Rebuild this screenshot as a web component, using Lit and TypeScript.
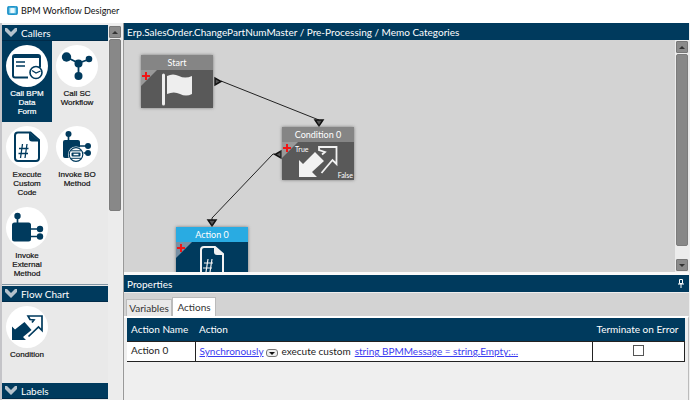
import { LitElement, html, css, svg } from "lit";
import { customElement } from "lit/decorators.js";

const NAVY = "#003a5d";

const icons = {
  form: svg`
    <path d="M9 10h23q2 0 2 2v10.500M22 32.500H9q-2 0-2-2V12q0-2 2-2" fill="none" stroke="${NAVY}" stroke-width="2"/>
    <path d="M7 10h27v3H7z" fill="${NAVY}"/>
    <path d="M10 17h9M10 21h9" stroke="${NAVY}" stroke-width="1.600"/>
    <circle cx="30" cy="27.500" r="6" fill="#fff" stroke="${NAVY}" stroke-width="1.600"/>
    <path d="M26 25.500l4 2.500 4.500-2" fill="none" stroke="${NAVY}" stroke-width="1.300"/>`,
  workflow: svg`
    <path d="M10 12l12.500 6L34 14M22.500 18v13" fill="none" stroke="${NAVY}" stroke-width="1.800"/>
    <circle cx="10.500" cy="12" r="4.700" fill="${NAVY}"/>
    <circle cx="22.500" cy="18.500" r="4" fill="${NAVY}"/>
    <circle cx="33" cy="14" r="3.300" fill="${NAVY}"/>
    <circle cx="22.500" cy="31" r="4" fill="${NAVY}"/>`,
  code: svg`
    <path d="M12 6.500h12.500L33 14v18q0 3-3 3H12q-3 0-3-3V9.500q0-3 3-3z" fill="none" stroke="${NAVY}" stroke-width="2"/>
    <path d="M23 6L33.500 15.500H26q-3 0-3-3z" fill="${NAVY}"/>
    <path d="M16.500 18l-2 14M21 18l-2 14M13 22.500h9.500M12.500 27.500h9.500" stroke="${NAVY}" stroke-width="1.300"/>`,
  bo: svg`
    <path d="M12.500 9v8M24 20h8M24 27h8" stroke="${NAVY}" stroke-width="1.700"/>
    <circle cx="12.500" cy="8" r="3" fill="${NAVY}"/>
    <rect x="7" y="14" width="17" height="18" rx="2" fill="${NAVY}"/>
    <circle cx="32" cy="20" r="3" fill="${NAVY}"/><circle cx="32" cy="27" r="3" fill="${NAVY}"/>
    <circle cx="20" cy="28.500" r="8" fill="#fff"/>
    <circle cx="20" cy="28.500" r="6.800" fill="#fff" stroke="${NAVY}" stroke-width="1.200"/>
    <path d="M15 24.800h10M15 32.300h10" fill="none" stroke="${NAVY}" stroke-width="1"/>
    <rect x="15.500" y="26.500" width="9" height="4" rx="1" fill="${NAVY}"/>
    <path d="M17.500 28.500h5" stroke="#fff" stroke-width="1.300"/>`,
  external: svg`
    <path d="M11.500 9v8M25 22h9M25 29.500h9" stroke="${NAVY}" stroke-width="1.700"/>
    <circle cx="11.500" cy="9" r="3.200" fill="${NAVY}"/>
    <rect x="6" y="15.500" width="19" height="19" rx="2.500" fill="${NAVY}"/>
    <circle cx="34" cy="22" r="3.200" fill="${NAVY}"/><circle cx="34" cy="29.500" r="3.200" fill="${NAVY}"/>`,
  condition: svg`
    <path d="M6 34V20.500l3 3L18.500 16l7 8-8.500 7 3 3z" fill="${NAVY}"/>
    <path d="M22.500 30.500L32.500 21l3.500 3.500V10H22l2 3.500 4 .5-2 2.500" fill="none" stroke="${NAVY}" stroke-width="1.700"/>`,
};

const glyphs = {
  flag: svg`
    <path d="M22.500 5v29" stroke="#eee" stroke-width="3" stroke-linecap="round"/>
    <path d="M26 6q6-3 12 0t13 0v18q-6 3-12 0t-13 0z" fill="#eee"/>`,
  arrows: svg`
    <path d="M17 35V18l4 4L33 10l9 9-12 11 5 5z" fill="#f2f2f2"/>
    <path d="M39.500 31L50.500 18l4 4V5H37v3l6 2-3 2.500" fill="none" stroke="#f2f2f2" stroke-width="1.800"/>`,
  file: svg`
    <path d="M28 5h11l8 7v22q0 3-3 3H28q-3 0-3-3V8q0-3 3-3z" fill="none" stroke="#f2f2f2" stroke-width="2"/>
    <path d="M38 4l10 9h-7q-3 0-3-3z" fill="#f2f2f2"/>
    <path d="M32 17l-2 13M36 17l-2 13M28 21h9M27 26h9" stroke="#f2f2f2" stroke-width="1.200"/>`,
};

const tiles = [
  { icon: icons.form, label: "Call BPM Data Form", selected: true },
  { icon: icons.workflow, label: "Call SC Workflow" },
  { icon: icons.code, label: "Execute Custom Code" },
  { icon: icons.bo, label: "Invoke BO Method" },
  { icon: icons.external, label: "Invoke External Method" },
];

const nodes = [
  { name: "Start", x: 17, y: 15, glyph: glyphs.flag, kind: "" },
  { name: "Condition 0", x: 158, y: 87, glyph: glyphs.arrows, kind: "branch" },
  { name: "Action 0", x: 52, y: 187, glyph: glyphs.file, kind: "active" },
];

@customElement("app-root")
export class AppRoot extends LitElement {
  static styles = css`
    :host {
      display: flex;
      flex-direction: column;
      height: 100vh;
      overflow: hidden;
      background: #fff;
      color: #222;
      font: 10px/16px Lato, "Open Sans", sans-serif;
    }
    * { box-sizing: border-box; }
    svg { display: block; }
    button { font: inherit; color: inherit; border: 0; padding: 0; margin: 0; background: none; }
    .titlebar {
      display: flex;
      align-items: center;
      gap: 3px;
      height: 23px;
      padding: 0 7px 2px;
      flex: none;
      color: #111;
      font-size: 9px;
    }
    .titlebar h1, .bar h2 { font: inherit; margin: 0; }
    .work { display: flex; flex: 1; min-height: 0; background: #efefef; }
    .palette {
      width: 124px;
      flex: none;
      display: flex;
      padding: 2px 1px 0 0;
      border-left: 2px solid #c4c4c8;
      border-right: 1px solid #999;
    }
    .groups { flex: 1; overflow: hidden; background: #e9e9e9; }
    .group {
      width: 100%;
      display: flex;
      align-items: center;
      gap: 4px;
      height: 16px;
      padding-left: 3px;
      border-bottom: 1px solid #002b49;
      background: #003a5d;
      color: #fff;
    }
    .tiles { display: grid; grid-template-columns: 50px 50px; grid-auto-rows: 81px; }
    .tiles.first { border-bottom: 1px solid #8296a4; margin-bottom: 1px; }
    .tiles.flow { height: 81px; }
    .tile {
      display: flex;
      flex-direction: column;
      align-items: center;
      padding: 4px 2px 0;
      font: 8px/9px "Liberation Sans", Arial, sans-serif;
      color: #111;
      -webkit-text-stroke: 0.2px;
      text-align: center;
    }
    .tile span { width: 44px; margin-top: 2px; }
    .tile .narrow { width: 36px; }
    .tile.selected { background: #003a5d; color: #fff; }
    .disc { background: #fff; border-radius: 50%; flex: none; }
    .scroll {
      width: 14px;
      flex: none;
      display: flex;
      flex-direction: column;
      gap: 1px;
      padding: 1px;
      background: #ececec;
    }
    .step {
      height: 12px;
      display: grid;
      place-items: center;
      border: 1px solid #777;
      border-radius: 1px;
      background: #8b8b8b;
      flex: none;
    }
    .thumb { background: #888; border: 1px solid #7c7c7c; border-radius: 2px; }
    .palette .thumb { flex: 0 1 172px; }
    .surface .thumb { flex: 1; margin-bottom: 12px; }
    .main {
      flex: 1;
      min-width: 0;
      display: grid;
      grid-template-rows: minmax(0, 1fr) 125px;
      padding-right: 1px;
    }
    .main > section { display: flex; flex-direction: column; min-height: 0; }
    .bar {
      display: flex;
      align-items: center;
      justify-content: space-between;
      height: 17px;
      padding: 0 5px 0 3px;
      flex: none;
      background: #003a5d;
      color: #fff;
    }
    .surface { flex: 1; display: flex; min-height: 0; background: #d3d3d3; border-bottom: 3px solid #fafafa; }
    .canvas { flex: 1; position: relative; overflow: hidden; }
    .links { position: absolute; left: 0; top: 0; }
    .node {
      position: absolute;
      width: 72px;
      background: #595959;
      color: #fff;
      box-shadow: 0 0 3px #777;
    }
    .node header {
      height: 15px;
      background: #858585;
      text-align: center;
      font-size: 9px;
      line-height: 15px;
    }
    .node.active { background: #003a5d; }
    .node.active header { background: #29abe2; }
    .yes, .no { position: absolute; font-size: 7px; line-height: 10px; }
    .yes { left: 13px; top: 17px; }
    .no { right: 1px; bottom: 0; }
    .properties { background: #efefef; }
    .tabs {
      display: flex;
      align-items: flex-end;
      height: 24px;
      padding-left: 2px;
      flex: none;
      background: #d3d3d3;
      border-top: 1px solid #eee;
    }
    .tab { height: 17px; width: 46px; border: 1px solid #bbb; border-bottom: 0; background: #e9e9e9; color: #333; }
    .tab.on { height: 19px; width: 44px; background: #fff; }
    .sheet { flex: 1; border-top: 2px solid #fff; padding: 0 3px; border-right: 1px solid #bbb; }
    table { width: 100%; border-collapse: collapse; table-layout: fixed; color: #222; }
    th {
      height: 23px;
      padding: 0 4px;
      background: #003a5d;
      color: #fff;
      font-weight: normal;
      text-align: left;
      white-space: nowrap;
    }
    td { height: 20px; padding: 0 4px; background: #fff; border: 1px solid #222; }
    td:first-child { border-left: 0; padding-bottom: 2px; }
    .name { width: 68px; }
    .error { width: 92px; }
    .rule { display: flex; align-items: center; gap: 4px; white-space: nowrap; }
    .rule a { color: #3a3af0; }
    .rule .mode { display: flex; align-items: center; gap: 2px; }
    .drop {
      width: 12px;
      height: 8px;
      display: grid;
      place-items: center;
      margin-top: 4px;
      border: 1px solid #777;
      border-radius: 3px;
      background: #eee;
    }
    .center { text-align: center; }
    .tick { appearance: none; display: block; width: 11px; height: 11px; margin: 0 auto 2px; border: 1px solid #555; background: #fff; }
  `;

  private group(name: string) {
    return html`<button class="group">
      <svg width="12" height="9" viewBox="0 0 12 9" aria-hidden="true">
        <path d="M0 0h2l4 4 4-4h2v3L6 9 0 3z" fill="#b4c2cc"/>
      </svg>${name}</button>`;
  }

  private tile(t: { icon: unknown; label: string; selected?: boolean }) {
    const narrow = t.label.split(" ").length > 2 && t.label !== "Invoke BO Method";
    return html`<button class="tile ${t.selected ? "selected" : ""}">
      <svg class="disc" width="42" height="42" viewBox="0 0 42 42" aria-hidden="true">${t.icon}</svg>
      <span class=${narrow ? "narrow" : ""}>${t.label}</span>
    </button>`;
  }

  private step(up: boolean) {
    return html`<button class="step" aria-label=${up ? "Scroll up" : "Scroll down"}>
      <svg width="6" height="3" viewBox="0 0 6 3"><path d=${up ? "M0 3l3-3 3 3z" : "M0 0h6L3 3z"} fill="#333"/></svg>
    </button>`;
  }

  render() {
    return html`
      <header class="titlebar">
        <svg width="11" height="9" viewBox="0 0 12 10" aria-hidden="true">
          <rect x="1" y="1" width="10" height="8" rx="1" fill="#e4f6fc" stroke="#1c91c8" stroke-width="2"/>
          <path d="M3 0v10M9 0v10" stroke="#35b0dd" stroke-width="1"/>
          <path d="M4 3h4v4H4z" fill="#e9fbff"/>
        </svg>
        <h1>BPM Workflow Designer</h1>
      </header>
      <div class="work">
        <aside class="palette">
          <div class="groups">
            ${this.group("Callers")}
            <div class="tiles first">${tiles.map((t) => this.tile(t))}</div>
            ${this.group("Flow Chart")}
            <div class="tiles flow">${this.tile({ icon: icons.condition, label: "Condition" })}</div>
            ${this.group("Labels")}
          </div>
          <div class="scroll">${this.step(true)}<div class="thumb"></div></div>
        </aside>
        <main class="main">
          <section>
            <div class="bar"><h2>Erp.SalesOrder.ChangePartNumMaster / Pre-Processing / Memo Categories</h2></div>
            <div class="surface">
              <div class="canvas">
                <svg class="links" width="300" height="232" viewBox="0 0 300 232" aria-hidden="true">
                  <path d="M97 41l98 39v3M151 114h-2L88 178v3" fill="none" stroke="#222"/>
                  <g fill="#555" stroke="#111" stroke-width="1.500">
                    <path d="M91 38v7l6-3.500zM191 80h8l-4 6zM157 111v7l-6-3.500zM84 180h8l-4 6z"/>
                  </g>
                </svg>
                ${nodes.map((n) => html`
                  <article class="node ${n.kind}" style="left:${n.x}px;top:${n.y}px">
                    <header>${n.name}</header>
                    <svg width="72" height="38" viewBox="0 0 72 38" aria-hidden="true">
                      <path d="M0 0h16L0 16z" fill=${n.kind === "active" ? "#7890a4" : "#999"}/>
                      ${n.glyph}
                      <path d="M5 2v8M1 6h8" stroke="#f01515" stroke-width="2"/>
                    </svg>
                    ${n.kind === "branch" ? html`<span class="yes">True</span><span class="no">False</span>` : ""}
                  </article>`)}
              </div>
              <div class="scroll">${this.step(true)}<div class="thumb"></div>${this.step(false)}</div>
            </div>
          </section>
          <section class="properties">
            <div class="bar">
              <h2>Properties</h2>
              <button aria-label="Pin panel">
                <svg width="6" height="9" viewBox="0 0 6 9">
                  <path d="M1.500 0.500h3v4h-3zM0 5h6M3 5v4" fill="none" stroke="#fff"/>
                </svg>
              </button>
            </div>
            <div class="tabs" role="tablist">
              <button class="tab" role="tab">Variables</button>
              <button class="tab on" role="tab" aria-selected="true">Actions</button>
            </div>
            <div class="sheet">
              <table>
                <thead>
                  <tr><th class="name">Action Name</th><th>Action</th><th class="error" id="terminate">Terminate on Error</th></tr>
                </thead>
                <tbody>
                  <tr>
                    <td>Action 0</td>
                    <td><div class="rule">
                      <span class="mode"><a href="#">Synchronously</a>
                        <button class="drop" aria-label="Choose mode">
                          <svg width="6" height="3" viewBox="0 0 6 3"><path d="M0 0h6L3 3z" fill="#111"/></svg>
                        </button>
                      </span>
                      <span>execute custom</span>
                      <a href="#">string BPMMessage = string.Empty;...</a>
                    </div></td>
                    <td class="center"><input class="tick" type="checkbox" aria-labelledby="terminate"></td>
                  </tr>
                </tbody>
              </table>
            </div>
          </section>
        </main>
      </div>`;
  }
}
